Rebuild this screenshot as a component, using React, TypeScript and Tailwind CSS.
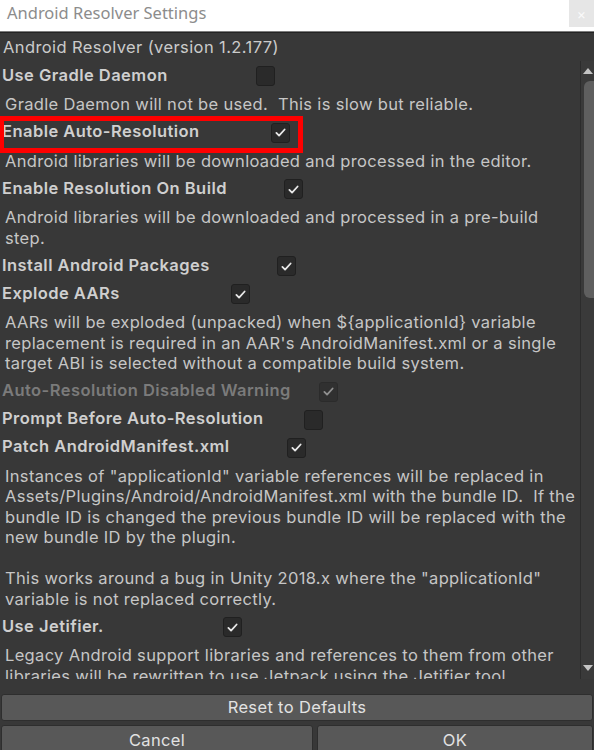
import React from "react";

type Row =
  | { kind: "label"; text: string; checked: boolean; pad: string; disabled?: boolean; marked?: boolean }
  | { kind: "para"; lines: string[] };

const rows: Row[] = [
  { kind: "label", text: "Use Gradle Daemon", checked: false, pad: "w-[254px]" },
  { kind: "para", lines: ["Gradle Daemon will not be used.  This is slow but reliable."] },
  { kind: "label", text: "Enable Auto-Resolution", checked: true, pad: "w-[269px]", marked: true },
  { kind: "para", lines: ["Android libraries will be downloaded and processed in the editor."] },
  { kind: "label", text: "Enable Resolution On Build", checked: true, pad: "w-[282px]" },
  {
    kind: "para",
    lines: ["Android libraries will be downloaded and processed in a pre-build", "step."],
  },
  { kind: "label", text: "Install Android Packages", checked: true, pad: "w-[275px]" },
  { kind: "label", text: "Explode AARs", checked: true, pad: "w-[229px]" },
  {
    kind: "para",
    lines: [
      "AARs will be exploded (unpacked) when ${applicationId} variable",
      "replacement is required in an AAR's AndroidManifest.xml or a single",
      "target ABI is selected without a compatible build system.",
    ],
  },
  { kind: "label", text: "Auto-Resolution Disabled Warning", checked: true, pad: "w-[317px]", disabled: true },
  { kind: "label", text: "Prompt Before Auto-Resolution", checked: false, pad: "w-[302px]" },
  { kind: "label", text: "Patch AndroidManifest.xml", checked: true, pad: "w-[285px]" },
  {
    kind: "para",
    lines: [
      'Instances of "applicationId" variable references will be replaced in',
      "Assets/Plugins/Android/AndroidManifest.xml with the bundle ID.  If the",
      "bundle ID is changed the previous bundle ID will be replaced with the",
      "new bundle ID by the plugin.",
      " ",
      'This works around a bug in Unity 2018.x where the "applicationId"',
      "variable is not replaced correctly.",
    ],
  },
  { kind: "label", text: "Use Jetifier.", checked: true, pad: "w-[221px]" },
  {
    kind: "para",
    lines: [
      "Legacy Android support libraries and references to them from other",
      "libraries will be rewritten to use Jetpack using the Jetifier tool.",
    ],
  },
];

function CheckBox({ checked, disabled }: { checked: boolean; disabled?: boolean }) {
  return (
    <div
      className={
        "mt-[2px] w-[19px] h-[20px] shrink-0 rounded-[3px] bg-[#2a2a2a] border border-[#202020] flex items-center justify-center " +
        (disabled ? "opacity-50" : "")
      }
    >
      {checked && (
        <svg className="w-[15px] h-[15px]" viewBox="0 0 20 20" fill="none">
          <path
            d="M4.5 10.5l3.6 3.6L15.5 6"
            stroke="#e8e8e8"
            strokeWidth={2.4}
            strokeLinecap="round"
            strokeLinejoin="round"
          />
        </svg>
      )}
    </div>
  );
}

function Button({ label, className }: { label: string; className: string }) {
  return (
    <div
      className={
        "flex items-center justify-center rounded-[3px] bg-[#585858] border border-[#2e2e2e] text-[16.5px] tracking-[0.35px] text-[#e2e2e2] " +
        className
      }
    >
      {label}
    </div>
  );
}

export default function App() {
  return (
    <div className="w-[594px] h-[750px] overflow-hidden flex flex-col bg-[#383838] font-['Inter',sans-serif]">
      {/* window title */}
      <div className="h-[31px] shrink-0 bg-white flex items-start justify-between">
        <div className="pl-[7px] pt-[1px] text-[16.5px] text-[#8c8c8c] font-['Noto_Sans',sans-serif]">
          Android Resolver Settings
        </div>
        <div className="w-[25px] h-[27px] bg-[#e6e6e6] flex items-center justify-center text-[14px] text-[#fafafa]">
          ×
        </div>
      </div>
      <div className="h-[1px] shrink-0 bg-[#7c7c7c]" />
      <div className="h-[1px] shrink-0 bg-[#232323]" />

      <div className="h-[28px] shrink-0 flex items-center pl-[3px] text-[16.5px] tracking-[0.4px] text-[#cbcbcb]">
        Android Resolver (version 1.2.177)
      </div>

      {/* scroll view */}
      <div className="relative h-[618px] shrink-0 flex">
        <div className="flex-1 overflow-hidden text-[16.5px]">
          {rows.map((row, i) =>
            row.kind === "label" ? (
              <div key={i} className="relative h-[28px] flex items-center pl-[2px]">
                <span
                  className={
                    row.pad +
                    " shrink-0 font-semibold tracking-[0.45px] whitespace-nowrap " +
                    (row.disabled ? "text-[#7b7b7b]" : "text-[#cfcfcf]")
                  }
                >
                  {row.text}
                </span>
                <CheckBox checked={row.checked} disabled={row.disabled} />
                {row.marked && (
                  <div className="absolute left-0 top-[-2px] w-[303px] h-[37px] border-[5px] border-l-4 border-[#ff0000]" />
                )}
              </div>
            ) : (
              <div key={i} className="pl-[5px] pt-[5px] pb-[3px] leading-[20.5px] tracking-[0.33px] text-[#c6c6c6]">
                {row.lines.map((line, j) => (
                  <div key={j} className="whitespace-pre">
                    {line}
                  </div>
                ))}
              </div>
            )
          )}
        </div>

        {/* vertical scrollbar */}
        <div className="w-[14px] shrink-0 border-l border-[#2c2c2c] bg-[#3a3a3a] flex flex-col items-center pl-[1px]">
          <svg className="mt-[7px] w-[10px] h-[6px]" viewBox="0 0 10 6">
            <path d="M0 6L5 0L10 6Z" fill="#c4c4c4" />
          </svg>
          <div className="mt-[7px] ml-[3px] w-[12px] h-[217px] rounded-l-[6px] bg-[#5f5f5f]" />
          <div className="flex-1" />
          <svg className="mb-[8px] w-[10px] h-[6px]" viewBox="0 0 10 6">
            <path d="M0 0L10 0L5 6Z" fill="#c4c4c4" />
          </svg>
        </div>
      </div>

      {/* buttons */}
      <div className="pt-[15px] px-[1px] flex flex-col gap-[4px]">
        <Button label="Reset to Defaults" className="h-[27px]" />
        <div className="flex gap-[4px]">
          <Button label="Cancel" className="w-[312px] h-[30px]" />
          <Button label="OK" className="flex-1 h-[30px]" />
        </div>
      </div>
    </div>
  );
}
